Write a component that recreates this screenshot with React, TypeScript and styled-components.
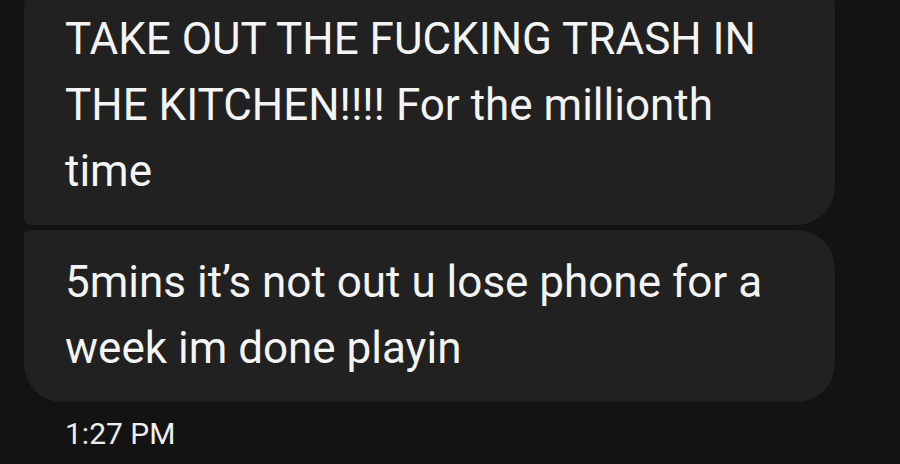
import React from "react";
import styled, { createGlobalStyle } from "styled-components";

const Global = createGlobalStyle`
  html, body { margin: 0; padding: 0; background: #131313; }
  body { overflow: hidden; font-family: Roboto, "Noto Sans", Arial, sans-serif; }
`;

const Thread = styled.div`
  width: 900px;
  height: 464px;
  overflow: hidden;
  box-sizing: border-box;
  padding-left: 24px;
  display: flex;
  flex-direction: column;
  align-items: flex-start;
  gap: 5px;
`;

type BubbleProps = { $first?: boolean };

const Bubble = styled.div<BubbleProps>`
  box-sizing: border-box;
  width: 811px;
  background: #212121;
  color: #f4f4f4;
  font-size: 44px;
  line-height: 66px;
  padding: ${(p) => (p.$first ? "36px 40px 21px 41px" : "19px 40px 21px 41px")};
  margin-top: ${(p) => (p.$first ? "-30px" : "0")};
  border-radius: ${(p) => (p.$first ? "38px 38px 38px 6px" : "6px 38px 38px 38px")};
`;

const Time = styled.div`
  margin-top: 7px;
  padding-left: 41px;
  color: #eeeeee;
  font-size: 30px;
  line-height: 40px;
`;

export default function App() {
  return (
    <>
      <Global />
      <Thread>
        <Bubble $first>
          TAKE OUT THE FUCKING TRASH IN THE KITCHEN!!!! For the millionth time
        </Bubble>
        <Bubble>5mins it’s not out u lose phone for a week im done playin</Bubble>
        <Time>1:27 PM</Time>
      </Thread>
    </>
  );
}
